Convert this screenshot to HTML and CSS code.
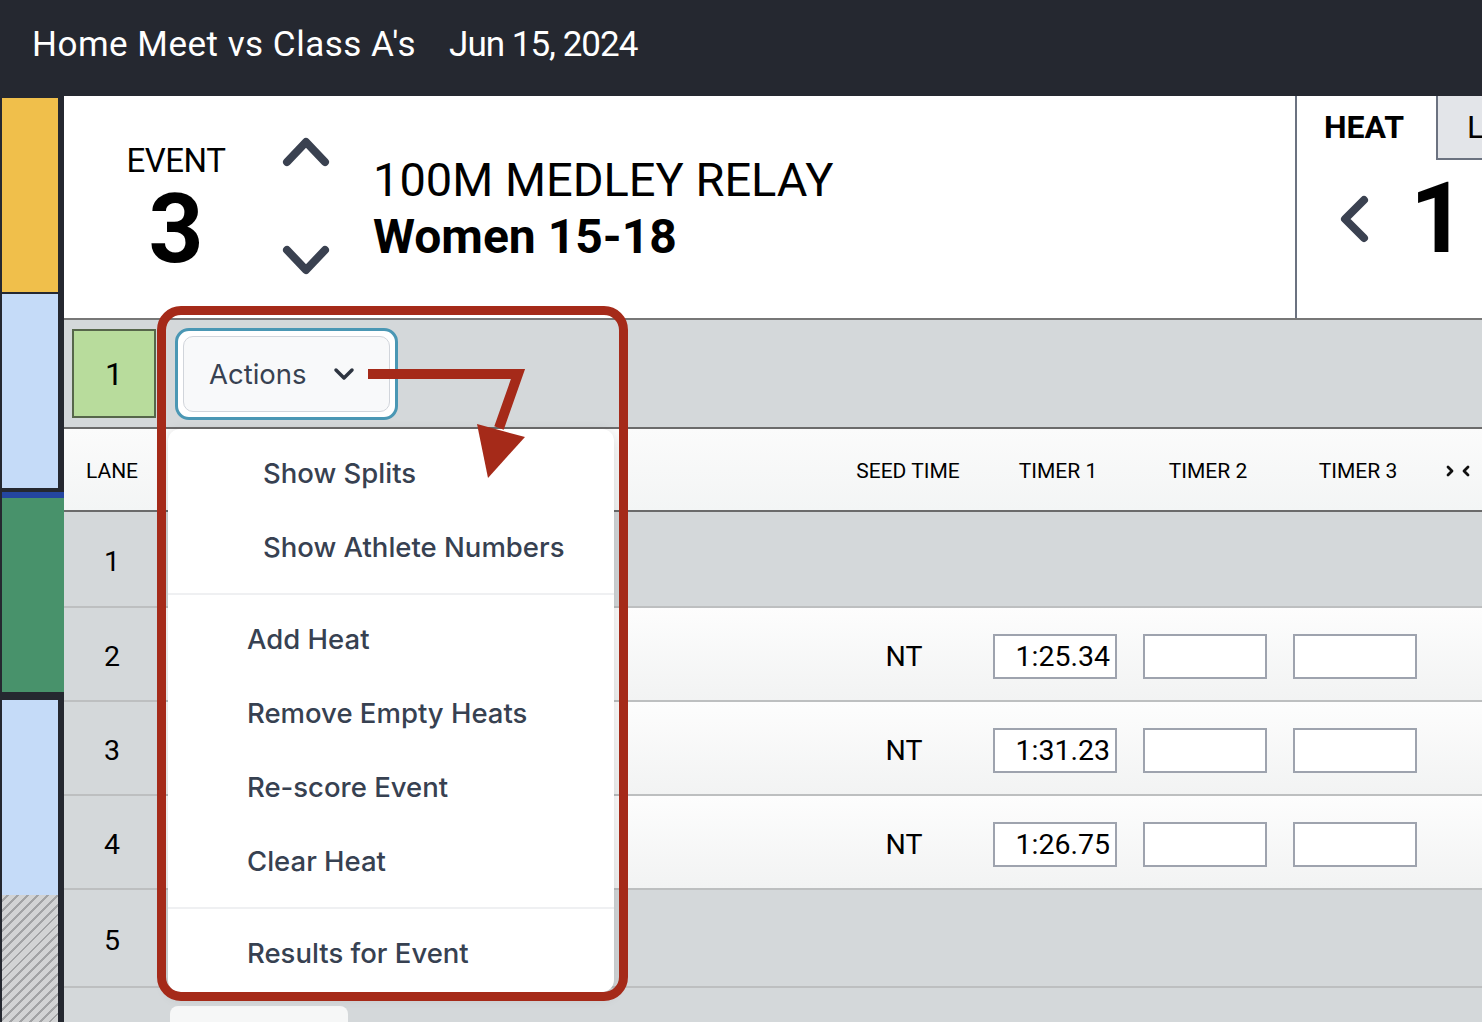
FILE: index.html
```html
<!DOCTYPE html>
<html lang="en">
<head>
<meta charset="utf-8">
<title>Home Meet vs Class A's</title>
<link rel="stylesheet" href="styles.css">
</head>
<body>
<header class="topbar">
  <span class="meet-name">Home Meet vs Class A's</span>
  <span class="meet-date">Jun 15, 2024</span>
</header>
<div class="layout">
  <aside class="sidebar">
    <div class="sb sb-yellow"></div>
    <div class="sb sb-blue sb-blue1"></div>
    <div class="sb-strip"></div>
    <div class="sb-green"></div>
    <div class="sb sb-blue sb-blue2"></div>
    <div class="sb sb-hatch"></div>
  </aside>
  <main class="main">
    <section class="event-header">
      <div class="event-info">
        <div class="event-num">
          <div class="event-label">EVENT</div>
          <div class="event-value">3</div>
        </div>
        <div class="event-nav">
          <svg class="chev" viewBox="0 0 54 34" width="54" height="34"><polyline points="8,27 27,7 46,27" /></svg>
          <svg class="chev" viewBox="0 0 54 34" width="54" height="34"><polyline points="8,7 27,27 46,7" /></svg>
        </div>
        <div class="event-title">
          <div class="event-name">100M MEDLEY RELAY</div>
          <div class="event-group">Women 15-18</div>
        </div>
      </div>
      <div class="heat-panel">
        <div class="heat-top">
          <div class="heat-label">HEAT</div>
          <div class="heat-tab">L</div>
        </div>
        <div class="heat-num-row">
          <svg class="chev-left" viewBox="0 0 32 48" width="32" height="48"><polyline points="26,5 7,24 26,43" /></svg>
          <span class="heat-num">1</span>
        </div>
      </div>
    </section>
    <section class="heat-toolbar">
      <div class="heat-box">1</div>
      <div class="actions-ring">
        <div class="actions-btn">
          <span>Actions</span>
          <svg class="actions-chev" viewBox="0 0 22 14" width="22" height="14"><polyline points="3,3 11,11 19,3" /></svg>
        </div>
      </div>
    </section>
    <div class="table">
      <div class="row head">
        <div class="c lane">LANE</div>
        <div class="c name"></div>
        <div class="c ctr">SEED TIME</div>
        <div class="c ctr">TIMER 1</div>
        <div class="c ctr">TIMER 2</div>
        <div class="c ctr">TIMER 3</div>
        <div class="c ctr"><svg class="collapse" viewBox="0 0 26 14" width="26" height="14"><polyline points="3,3 7,7 3,11" /><polyline points="23,3 19,7 23,11" /></svg></div>
      </div>
      <div class="row empty">
        <div class="c lane">1</div>
      </div>
      <div class="row filled">
        <div class="c lane">2</div>
        <div class="c name"></div>
        <div class="c ctr seed">NT</div>
        <div class="c"><div class="tbox">1:25.34</div></div>
        <div class="c"><div class="tbox"></div></div>
        <div class="c"><div class="tbox"></div></div>
        <div class="c"></div>
      </div>
      <div class="row filled">
        <div class="c lane">3</div>
        <div class="c name"></div>
        <div class="c ctr seed">NT</div>
        <div class="c"><div class="tbox">1:31.23</div></div>
        <div class="c"><div class="tbox"></div></div>
        <div class="c"><div class="tbox"></div></div>
        <div class="c"></div>
      </div>
      <div class="row filled">
        <div class="c lane">4</div>
        <div class="c name"></div>
        <div class="c ctr seed">NT</div>
        <div class="c"><div class="tbox">1:26.75</div></div>
        <div class="c"><div class="tbox"></div></div>
        <div class="c"><div class="tbox"></div></div>
        <div class="c"></div>
      </div>
      <div class="row empty tall">
        <div class="c lane">5</div>
      </div>
      <div class="row empty last">
        <div class="c lane"></div>
        <div class="c name"><div class="peek"></div></div>
      </div>
    </div>
  </main>
</div>

<div class="menu">
  <div class="menu-group indent">
    <div class="menu-item">Show Splits</div>
    <div class="menu-item">Show Athlete Numbers</div>
  </div>
  <div class="menu-sep"></div>
  <div class="menu-group">
    <div class="menu-item">Add Heat</div>
    <div class="menu-item">Remove Empty Heats</div>
    <div class="menu-item">Re-score Event</div>
    <div class="menu-item">Clear Heat</div>
  </div>
  <div class="menu-sep"></div>
  <div class="menu-group last">
    <div class="menu-item">Results for Event</div>
  </div>
</div>

<div class="annot-rect"></div>
<svg class="annot-arrow" viewBox="0 0 180 130" width="180" height="130">
  <polyline class="arrow-line" points="8,14 158,14 139,68" />
  <polygon class="arrow-head" points="117,64 165,77 128,118" />
</svg>
</body>
</html>
```

FILE: styles.css
```css
* { box-sizing: border-box; }

html, body {
  margin: 0;
  padding: 0;
}

body {
  width: 1482px;
  height: 1022px;
  overflow: hidden;
  background: #252830;
  font-family: Roboto, "Liberation Sans", Arial, sans-serif;
  color: #000;
  position: relative;
}

/* Top bar */
.topbar {
  height: 96px;
  display: flex;
  align-items: center;
  padding-left: 32px;
  padding-bottom: 8px;
  color: #fff;
  font-size: 35px;
}
.meet-name { letter-spacing: 0.5px; }
.meet-date { margin-left: 33px; letter-spacing: -1px; }

/* Layout */
.layout {
  display: flex;
  height: 926px;
}

.sidebar {
  width: 64px;
  flex: none;
  display: flex;
  flex-direction: column;
  padding-top: 2px;
}
.sb {
  margin-left: 2px;
  width: 56px;
}
.sb-yellow { height: 194px; background: #f0bf4b; }
.sb-blue { background: #c5dbf8; }
.sb-blue1 { height: 194px; margin-top: 2px; }
.sb-strip {
  margin-top: 4px;
  margin-left: 2px;
  width: 62px;
  height: 6px;
  background: #2446a0;
}
.sb-green {
  margin-left: 2px;
  width: 62px;
  height: 194px;
  background: #48926b;
}
.sb-blue2 { height: 195px; margin-top: 8px; }
.sb-hatch {
  flex: 1;
  background: repeating-linear-gradient(-45deg, #d2d3d4 0 5px, #a2a3a5 5px 7px);
}

.main {
  flex: 1;
  background: #fff;
  display: flex;
  flex-direction: column;
  min-width: 0;
}

/* Event header */
.event-header {
  height: 224px;
  flex: none;
  display: flex;
  border-bottom: 2px solid #777;
}
.event-info {
  flex: 1;
  display: flex;
  align-items: center;
  padding-left: 47px;
  padding-top: 2px;
}
.event-num {
  width: 130px;
  text-align: center;
  margin-top: -4px;
}
.event-label {
  font-size: 33px;
  line-height: 1;
  letter-spacing: -0.5px;
}
.event-value {
  font-size: 96px;
  font-weight: 700;
  line-height: 0.8;
  margin-top: 14px;
}
.event-nav {
  margin-left: 38px;
  height: 142px;
  display: flex;
  flex-direction: column;
  justify-content: space-between;
  margin-top: -4px;
}
.chev polyline,
.chev-left polyline {
  fill: none;
  stroke: #3a4150;
  stroke-width: 8;
  stroke-linecap: round;
  stroke-linejoin: round;
}
.event-title {
  margin-left: 40px;
  font-size: 47px;
  line-height: 57px;
}
.event-group { font-weight: 700; font-size: 48px; }

.heat-panel {
  width: 187px;
  flex: none;
  border-left: 2px solid #6b7280;
  overflow: hidden;
  display: flex;
  flex-direction: column;
}
.heat-top {
  display: flex;
  height: 64px;
}
.heat-label {
  width: 139px;
  flex: none;
  padding-left: 27px;
  padding-top: 15px;
  font-size: 32px;
  font-weight: 700;
  line-height: 1;
}
.heat-tab {
  width: 80px;
  flex: none;
  background: #e3e5e9;
  border-left: 2px solid #6b7280;
  border-bottom: 2px solid #6b7280;
  padding-left: 29px;
  padding-top: 15px;
  font-size: 32px;
  line-height: 1;
}
.heat-num-row {
  display: flex;
  align-items: center;
  height: 118px;
  padding-left: 41px;
}
.heat-num {
  margin-left: 40px;
  font-size: 98px;
  font-weight: 700;
  line-height: 1;
}

/* Heat toolbar */
.heat-toolbar {
  height: 109px;
  flex: none;
  background: #d4d8da;
  border-bottom: 2px solid #6b6b6b;
  display: flex;
  align-items: center;
  padding-left: 8px;
}
.heat-box {
  width: 84px;
  height: 89px;
  background: #b8dc9c;
  border: 2px solid #56664a;
  display: flex;
  align-items: center;
  justify-content: center;
  font-size: 32px;
}
.actions-ring {
  margin-left: 19px;
  width: 223px;
  height: 92px;
  border: 3px solid #4a97b4;
  border-radius: 14px;
  background: #fff;
  padding: 5px;
}
.actions-btn {
  height: 100%;
  border: 1.5px solid #d1d5db;
  border-radius: 10px;
  background: #f8f9fa;
  display: flex;
  align-items: center;
  padding-left: 25px;
  font-family: Inter, "Noto Sans", sans-serif;
  font-size: 27.5px;
  color: #374151;
}
.actions-chev {
  margin-left: 26px;
}
.actions-chev polyline {
  fill: none;
  stroke: #2d3440;
  stroke-width: 3.5;
  stroke-linecap: round;
  stroke-linejoin: round;
}

/* Table */
.table {
  flex: 1;
  display: flex;
  flex-direction: column;
  background: #d4d8da;
}
.row {
  display: grid;
  grid-template-columns: 96px 673px 150px 150px 150px 150px 49px;
  height: 96px;
  border-bottom: 2px solid #bdbfc0;
  flex: none;
}
.row.head {
  height: 83px;
  background: linear-gradient(#fbfbfb, #f3f5f5);
  border-bottom: 2px solid #6b6b6b;
  font-size: 21px;
}
.row.head .c { padding-top: 2px; }
.row.filled {
  height: 94px;
  background: linear-gradient(#fdfdfd, #f2f3f3);
  font-size: 28.5px;
}
.row.empty {
  height: 96px;
  background: #d4d8da;
  font-size: 28.5px;
}
.row.tall { height: 98px; }
.row.last { border-bottom: none; flex: 1; }
.c {
  display: flex;
  align-items: center;
  padding-top: 4px;
}
.ctr { justify-content: center; }
.lane {
  justify-content: center;
  background: #d4d8da;
}
.row.head .lane { background: transparent; }
.seed { padding-right: 8px; }
.tbox {
  margin-left: 10px;
  width: 124px;
  height: 45px;
  border: 2px solid #9ea3ae;
  background: #fff;
  text-align: right;
  padding-right: 5px;
  line-height: 41px;
  font-size: 28.5px;
}
.collapse polyline {
  fill: none;
  stroke: #111;
  stroke-width: 2.8;
  stroke-linecap: round;
  stroke-linejoin: round;
}
.row.last .c { align-items: flex-start; padding-top: 0; }
.peek {
  margin-left: 10px;
  margin-top: 18px;
  width: 178px;
  height: 30px;
  background: #f6f7f7;
  border-radius: 8px 8px 0 0;
}

/* Dropdown menu (overlay) */
.menu {
  position: absolute;
  left: 168px;
  top: 429px;
  width: 446px;
  height: 563px;
  background: #fff;
  border-radius: 12px;
  box-shadow: 0 4px 14px rgba(0, 0, 0, 0.14);
  font-family: Inter, "Noto Sans", sans-serif;
  font-size: 27.5px;
  font-weight: 500;
  color: #374151;
}
.menu-group { padding: 8px 0; }
.menu-group.last { padding-bottom: 0; }
.menu-item {
  height: 74px;
  display: flex;
  align-items: center;
  padding-left: 79px;
  padding-bottom: 3px;
}
.menu-group.indent .menu-item { padding-left: 95px; }
.menu-sep {
  height: 2px;
  background: #eff0f2;
}

/* Annotation overlay */
.annot-rect {
  position: absolute;
  left: 157px;
  top: 306px;
  width: 471px;
  height: 695px;
  border: 9px solid #a52a19;
  border-radius: 24px;
  pointer-events: none;
}
.annot-arrow {
  position: absolute;
  left: 360px;
  top: 360px;
}
.arrow-line {
  fill: none;
  stroke: #a52a19;
  stroke-width: 10;
  stroke-linejoin: miter;
}
.arrow-head { fill: #a52a19; }
```
